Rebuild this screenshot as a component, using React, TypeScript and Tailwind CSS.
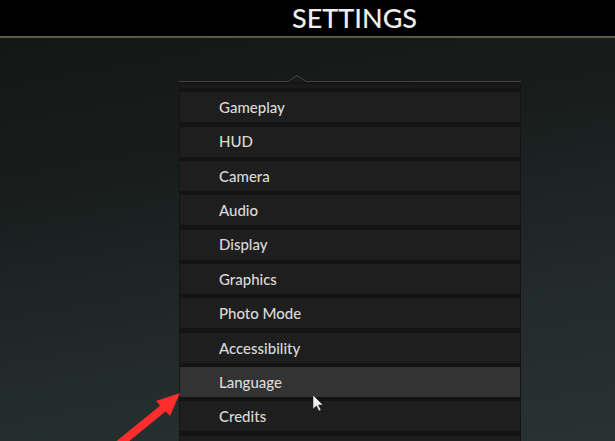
import React from "react";

const items = [
  "Gameplay",
  "HUD",
  "Camera",
  "Audio",
  "Display",
  "Graphics",
  "Photo Mode",
  "Accessibility",
  "Language",
  "Credits",
  "",
];

export default function App() {
  return (
    <div
      className="relative w-[615px] h-[441px] overflow-hidden bg-[linear-gradient(170deg,#131514_0%,#181d1c_35%,#222b2a_70%,#283231_100%)]"
      style={{ fontFamily: "Lato, 'Open Sans', sans-serif" }}
    >
      <div className="h-[38px] bg-black border-b-2 border-[#5b584c] flex items-start">
        <div className="ml-[292px] mt-[1px] text-[27px] leading-[34px] font-medium text-[#eeeeee]">
          SETTINGS
        </div>
      </div>

      <div className="relative ml-[179px] mt-[43px] w-[342px]">
        <svg
          className="absolute left-[106px] top-[-7px]"
          width="24"
          height="9"
          viewBox="0 0 24 9"
        >
          <polygon points="0,8 12,1 24,8" fill="#181c1b" />
          <polyline points="0,7.5 3,7.5 12,1.5 21,7.5 24,7.5" fill="none" stroke="#3d4442" strokeWidth="1" />
        </svg>
        <div className="h-[1px] bg-[#3d4442]" />
        <div className="bg-[#141414] px-[1px] pt-[2px] flex flex-col gap-[4.35px]">
          <div className="h-[4px] bg-[#1a1a1a]" />
          {items.map((label, i) => (
            <div
              key={i}
              className={
                "h-[30px] shrink-0 flex items-center pl-[39px] text-[15px] font-medium text-[#dadada] " +
                (label === "Language" ? "bg-[#343333]" : "bg-[#1f1e1e]")
              }
            >
              {label}
            </div>
          ))}
        </div>
      </div>

      <svg
        className="absolute left-0 top-0 pointer-events-none"
        width="615"
        height="441"
        viewBox="0 0 615 441"
      >
        <line x1="118" y1="445" x2="166" y2="406" stroke="#ff2d2d" strokeWidth="8" />
        <polygon points="180,393 156,401 170,416" fill="#ff2d2d" />
        <polygon
          points="313,395 313,409 316.5,406 319,411 321,410 318.5,405 323,405"
          fill="#f2f2f2"
          stroke="#222"
          strokeWidth="0.6"
        />
      </svg>
    </div>
  );
}
